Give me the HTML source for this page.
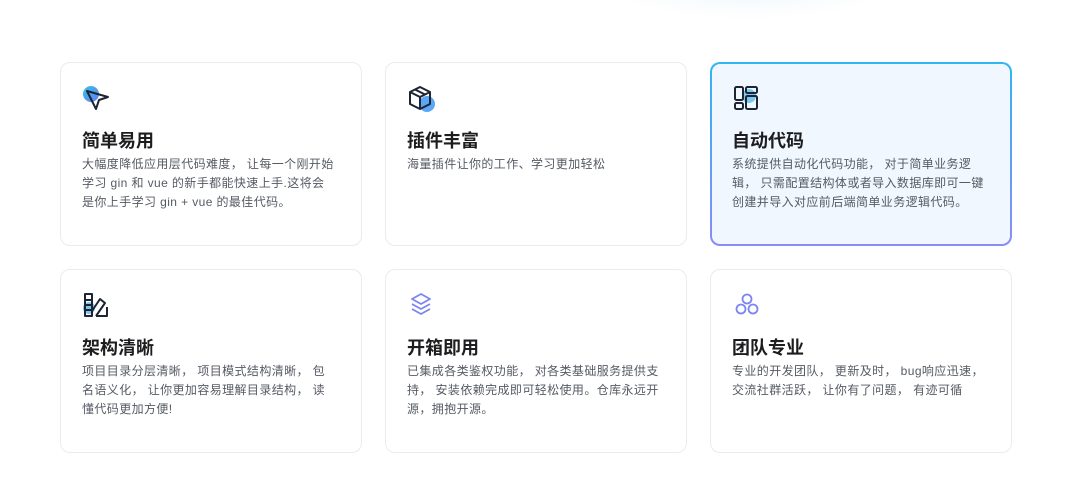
<!DOCTYPE html><html><head><meta charset="utf-8"><style>
body{margin:0;width:1080px;height:479px;background:#fff;font-family:"Liberation Sans","Noto Sans CJK SC",sans-serif;position:relative;overflow:hidden}
.glow{position:absolute;left:600px;top:-60px;width:300px;height:80px;background:radial-gradient(ellipse,#eef5fb 0%,rgba(255,255,255,0) 70%)}
.card{position:absolute;width:302px;height:184px;box-sizing:border-box;border:1px solid #e8ebf0;border-radius:10px;background:#fff}
.card svg{position:absolute;left:21px;top:21px}
.card h3{position:absolute;left:21px;top:64px;margin:0;font-size:18px;font-weight:bold;color:#1d1d1f}
.card p{position:absolute;left:21px;top:92px;margin:0;white-space:nowrap;font-size:12px;letter-spacing:0.4px;line-height:19px;color:#555a63}
.hl{background:linear-gradient(#f0f7ff,#f0f7ff) padding-box,linear-gradient(180deg,#2fb6f0,#8a8cf5) border-box;border:2px solid transparent}
.hl svg{left:20px;top:20px}.hl h3{left:20px;top:63px}.hl p{left:20px;top:91px}
</style></head><body><div class="glow"></div>
<div class="card" style="left:60px;top:62px"><svg width="30" height="30" viewBox="0 0 30 30"><defs><linearGradient id="g1" x1="0" y1="0" x2="1" y2="1"><stop offset="0" stop-color="#2ec4e8"/><stop offset="1" stop-color="#6b7cf5"/></linearGradient></defs><circle cx="9" cy="10" r="8" fill="url(#g1)"/><path d="M5 7 L26 13 L17 16 L14 25 Z" fill="none" stroke="#1d2433" stroke-width="2" stroke-linejoin="round"/></svg><h3>简单易用</h3><p>大幅度降低应用层代码难度， 让每一个刚开始<br>学习 gin 和 vue 的新手都能快速上手.这将会<br>是你上手学习 gin + vue 的最佳代码。</p></div>
<div class="card" style="left:385px;top:62px"><svg width="30" height="30" viewBox="0 0 30 30"><circle cx="20" cy="20" r="8" fill="#5aa8f5"/><path d="M3 8 L13 3 L23 8 L23 20 L13 25 L3 20 Z M3 8 L13 13 L23 8 M13 13 L13 25 M8 5.5 L18 10.5" fill="none" stroke="#1d2433" stroke-width="2" stroke-linejoin="round"/></svg><h3>插件丰富</h3><p>海量插件让你的工作、学习更加轻松</p></div>
<div class="card hl" style="left:710px;top:62px"><svg width="30" height="30" viewBox="0 0 30 30"><circle cx="17" cy="12" r="7" fill="#7cc8f0"/><rect x="3" y="3" width="8" height="13" rx="1.5" fill="none" stroke="#1d2433" stroke-width="2"/><rect x="3" y="19" width="8" height="6" rx="1.5" fill="none" stroke="#1d2433" stroke-width="2"/><rect x="14" y="3" width="11" height="6" rx="1.5" fill="none" stroke="#1d2433" stroke-width="2"/><rect x="14" y="12" width="11" height="13" rx="1.5" fill="none" stroke="#1d2433" stroke-width="2"/></svg><h3>自动代码</h3><p>系统提供自动化代码功能， 对于简单业务逻<br>辑， 只需配置结构体或者导入数据库即可一键<br>创建并导入对应前后端简单业务逻辑代码。</p></div>
<div class="card" style="left:60px;top:269px"><svg width="30" height="30" viewBox="0 0 30 30"><circle cx="7" cy="17" r="6" fill="#7cc8f0"/><path d="M3 3 H10 V25 H3 Z M3 9 H10 M3 14 H10 M3 19 H10 M10 20 L18 8 L23 12 L14 25 M14 25 H25 V16" fill="none" stroke="#1d2433" stroke-width="2" stroke-linejoin="round"/></svg><h3>架构清晰</h3><p>项目目录分层清晰， 项目模式结构清晰， 包<br>名语义化， 让你更加容易理解目录结构， 读<br>懂代码更加方便!</p></div>
<div class="card" style="left:385px;top:269px"><svg width="30" height="30" viewBox="0 0 30 30"><path d="M14 3 L23 8 L14 13 L5 8 Z M5 13 L14 18 L23 13 M5 18 L14 23 L23 18" fill="none" stroke="#7b86f2" stroke-width="1.8" stroke-linejoin="round"/></svg><h3>开箱即用</h3><p>已集成各类鉴权功能， 对各类基础服务提供支<br>持， 安装依赖完成即可轻松使用。仓库永远开<br>源，拥抱开源。</p></div>
<div class="card" style="left:710px;top:269px"><svg width="30" height="30" viewBox="0 0 30 30"><circle cx="15" cy="8" r="4.5" fill="none" stroke="#7b86f2" stroke-width="1.8"/><circle cx="9" cy="18" r="4.5" fill="none" stroke="#7b86f2" stroke-width="1.8"/><circle cx="21" cy="18" r="4.5" fill="none" stroke="#7b86f2" stroke-width="1.8"/></svg><h3>团队专业</h3><p>专业的开发团队， 更新及时， bug响应迅速，<br>交流社群活跃， 让你有了问题， 有迹可循</p></div>
</body></html>
